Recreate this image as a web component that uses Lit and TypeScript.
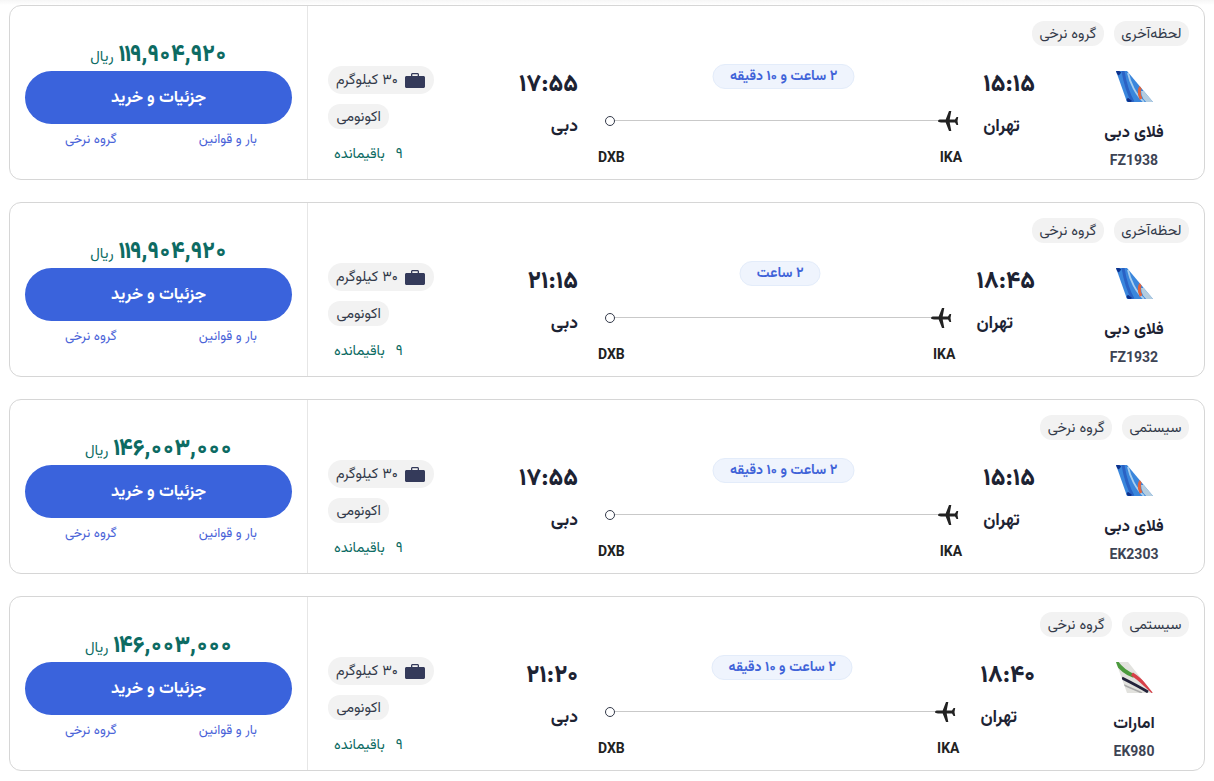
import { LitElement, html, css, svg } from "lit";
import { customElement } from "lit/decorators.js";

type F = { tags: string[]; price: string; air: "fz" | "ek"; name: string; code: string; dep: string; arr: string; dur: string };

const flights: F[] = [
  { tags: ["لحظه‌آخری", "گروه نرخی"], price: "۱۱۹,۹۰۴,۹۲۰", air: "fz", name: "فلای دبی", code: "FZ1938", dep: "۱۵:۱۵", arr: "۱۷:۵۵", dur: "۲ ساعت و ۱۰ دقیقه" },
  { tags: ["لحظه‌آخری", "گروه نرخی"], price: "۱۱۹,۹۰۴,۹۲۰", air: "fz", name: "فلای دبی", code: "FZ1932", dep: "۱۸:۴۵", arr: "۲۱:۱۵", dur: "۲ ساعت" },
  { tags: ["سیستمی", "گروه نرخی"], price: "۱۴۶,۰۰۳,۰۰۰", air: "fz", name: "فلای دبی", code: "EK2303", dep: "۱۵:۱۵", arr: "۱۷:۵۵", dur: "۲ ساعت و ۱۰ دقیقه" },
  { tags: ["سیستمی", "گروه نرخی"], price: "۱۴۶,۰۰۳,۰۰۰", air: "ek", name: "امارات", code: "EK980", dep: "۱۸:۴۰", arr: "۲۱:۲۰", dur: "۲ ساعت و ۱۰ دقیقه" },
];

const tailFz = svg`<svg class="tail" viewBox="0 0 37 31" width="37" height="31">
  <defs><clipPath id="cf"><path d="M0 0H11L37 31H11Z"/></clipPath><filter id="bf"><feGaussianBlur stdDeviation=".7"/></filter></defs>
  <g clip-path="url(#cf)"><rect width="37" height="31" fill="#3a86dc"/>
  <g filter="url(#bf)" fill="none">
    <path d="M12 2C14 12 20 24 28 31" stroke="#a9cfee" stroke-width="1.800"/>
    <path d="M7 0C9 12 13 24 17 31" stroke="#2a62c4" stroke-width="3"/>
    <path d="M26 14C22 19 23 24 25 28" stroke="#e0633c" stroke-width="3"/>
    <path d="M28 20C28 25 31 29 37 32" stroke="#b4cde0" stroke-width="6"/>
    <path d="M0 0L4 3" stroke="#10308c" stroke-width="4"/>
    <path d="M11 28L15 31" stroke="#10308c" stroke-width="3"/>
  </g></g></svg>`;

const tailEk = svg`<svg class="tail" viewBox="0 0 37 31" width="37" height="31">
  <defs><clipPath id="ce"><path d="M0 0H12L37 31H11Z"/></clipPath><filter id="be"><feGaussianBlur stdDeviation=".7"/></filter></defs>
  <g clip-path="url(#ce)"><rect width="37" height="31" fill="#e2e2de"/>
  <g filter="url(#be)" fill="none">
    <path d="M0 0C5 7 10 11 18 14" stroke="#4c9a3c" stroke-width="4"/>
    <path d="M16 12C24 17 30 24 37 30" stroke="#d8414a" stroke-width="3.500"/>
    <path d="M6 16C14 20 22 24 32 30" stroke="#23233a" stroke-width="2.800"/>
    <path d="M8 23C14 26 20 28 26 31" stroke="#aaaaaa" stroke-width="1.500"/>
  </g></g></svg>`;

const plane = svg`<svg class="plane" viewBox="0 0 21 20" width="21" height="20">
  <path fill="#222" d="M0 10c0-1 1.500-1.400 3-1.400h4.700L11 0h2.300l-1.600 8.600h5.300L18.600 6h1.600l-.7 4 .7 4h-1.600l-1.600-2.600h-5.300L13.300 20H11L7.700 11.400H3C1.500 11.400 0 11 0 10z"/></svg>`;

const bag = svg`<svg viewBox="0 0 20 15" width="20" height="15"><path fill="#343a5a" d="M6 3V1.500C6 .7 6.700 0 7.500 0h5c.8 0 1.500.7 1.500 1.500V3h4.500c.8 0 1.500.7 1.500 1.500V13.500c0 .8-.7 1.500-1.500 1.500H1.500C.7 15 0 14.300 0 13.500V4.500C0 3.700.7 3 1.500 3ZM7.300 3h5.400V1.300H7.300Z"/></svg>`;

const digitClass = (c: string) => (c === "۰" ? "d zero" : c === "۱" ? "d one" : "d");

@customElement("app-root")
export class AppRoot extends LitElement {
  static styles = css`
    :host { display: block; padding: 5px 9px; font-family: Vazirmatn, "Noto Sans Arabic", Roboto, "DejaVu Sans", sans-serif; color: #1d2333; background: linear-gradient(#f6f6f6, #fff 5px); }
    .card { display: flex; height: 175px; box-sizing: border-box; border: 1px solid #d6d6d6; border-radius: 12px; margin-bottom: 22px; background: #fff; }
    .main { flex: 1; display: flex; flex-direction: column; padding: 15px 15px 0 20px; min-width: 0; }
    .tags { display: flex; gap: 10px; height: 25px; }
    .pill { background: #f2f2f2; border-radius: 12px; font-size: 14.5px; color: #333a4a; padding: 1px 7.500px 0; box-sizing: border-box; height: 25px; white-space: nowrap; display: inline-flex; align-items: center; }
    .row { display: flex; margin-top: 18px; }
    .air { width: 110px; display: flex; flex-direction: column; align-items: center; margin-left: 44px; padding-top: 7px; }
    .tail { display: block; }
    .air .name { font-size: 16.5px; font-weight: 700; margin-top: 19px; line-height: 24px; }
    .air .code { font-family: Roboto, sans-serif; font-size: 14px; font-weight: 700; color: #3d4454; margin-top: 6px; line-height: 18px; }
    .time { font-size: 24px; font-weight: 800; line-height: 40px; padding-top: 1px; }
    .city { font-size: 17.500px; font-weight: 700; line-height: 24px; margin-top: 10px; }
    .dep { display: flex; flex-direction: column; align-items: flex-end; }
    .route { flex: 1; display: flex; flex-direction: column; margin: 0 21px 0 20px; min-width: 0; }
    .durw { display: flex; justify-content: center; transform: translateX(3.5px); }
    .dur { height: 25px; box-sizing: border-box; border: 1px solid #e3ecfa; background: #eff4fd; border-radius: 13px; color: #3f63d8; font-size: 14px; font-weight: 700; padding: 1px 16px 0; display: flex; align-items: center; white-space: nowrap; }
    .track { display: flex; align-items: center; margin: 22px 3px 0 7px; height: 20px; }
    .line { flex: 1; height: 1px; background: #c9c9c9; margin-top: -2px; }
    .dot { width: 10px; height: 10px; box-sizing: border-box; border: 1px solid #343a4a; border-radius: 50%; background: #fff; flex: none; }
    .plane { display: block; flex: none; }
    .ends { display: flex; justify-content: space-between; font-family: Roboto, sans-serif; font-weight: 700; font-size: 14px; line-height: 18px; margin-top: 17px; color: #222; }
    .arr { width: 60px; display: flex; flex-direction: column; align-items: flex-start; margin-left: 85px; }
    .bagc { width: 105px; display: flex; flex-direction: column; align-items: flex-end; padding-top: 2px; }
    .bagc .pill { margin-bottom: 10px; padding: 1px 8.500px 0; }
    .bagc .pill.big { height: 28px; padding: 1px 9px 0 8px; border-radius: 14px; gap: 7px; }
    .left { display: flex; gap: 11px; font-size: 14.5px; color: #0d6b63; justify-content: flex-start; margin: 6px 0 0 6px; line-height: 20px; white-space: nowrap; }
    .price { width: 298px; flex: none; box-sizing: border-box; border-right: 1px solid #e6e6e6; padding: 0 15px; display: flex; flex-direction: column; align-items: center; }
    .amt { display: flex; align-items: baseline; gap: 5px; color: #0d6b63; height: 65px; padding-top: 37px; box-sizing: border-box; line-height: 24px; }
    .amt b { font-size: 23px; font-weight: 800; direction: ltr; display: inline-flex; align-items: baseline; }
    .d { display: inline-block; font-size: 23px; font-weight: 800; }
    .d.zero { width: 12px; text-align: center; }
    .d.one { margin-right: -1.500px; }
    .amt > span { font-size: 15px; }
    .buy { width: 267px; height: 53px; border-radius: 27px; background: #3a63dc; color: #fff; font-size: 16.500px; font-weight: 700; display: flex; align-items: center; justify-content: center; flex: none; padding-top: 1px; box-sizing: border-box; }
    .links { width: 267px; box-sizing: border-box; padding: 0 35px 0 40px; display: flex; justify-content: space-between; color: #4a63d8; font-size: 13.200px; line-height: 18px; margin-top: 7px; }
  `;

  render() {
    return html`<div dir="rtl">${flights.map((f) => html`
      <div class="card">
        <div class="main">
          <div class="tags">${f.tags.map((t) => html`<span class="pill">${t}</span>`)}</div>
          <div class="row">
            <div class="air">
              ${f.air === "fz" ? tailFz : tailEk}
              <div class="name">${f.name}</div>
              <div class="code">${f.code}</div>
            </div>
            <div class="dep"><div class="time">${f.dep}</div><div class="city">تهران</div></div>
            <div class="route">
              <div class="durw"><div class="dur">${f.dur}</div></div>
              <div class="track">${plane}<div class="line"></div><div class="dot"></div></div>
              <div class="ends"><span>IKA</span><span>DXB</span></div>
            </div>
            <div class="arr"><div class="time">${f.arr}</div><div class="city">دبی</div></div>
            <div class="bagc">
              <span class="pill big">${bag}<span>۳۰ کیلوگرم</span></span>
              <span class="pill">اکونومی</span>
              <div class="left"><span>۹</span><span>باقیمانده</span></div>
            </div>
          </div>
        </div>
        <div class="price">
          <div class="amt"><b>${[...f.price].map((c) => html`<span class=${digitClass(c)}>${c}</span>`)}</b><span>ریال</span></div>
          <div class="buy">جزئیات و خرید</div>
          <div class="links"><span>بار و قوانین</span><span>گروه نرخی</span></div>
        </div>
      </div>`)}</div>`;
  }
}
